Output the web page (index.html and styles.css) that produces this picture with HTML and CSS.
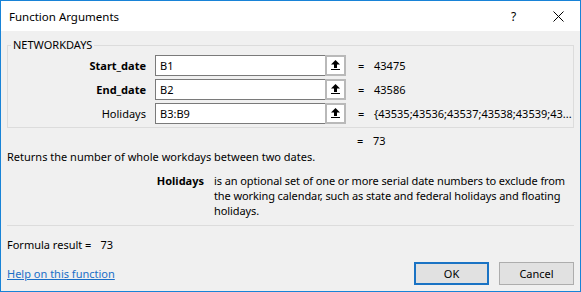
FILE: index.html
```html
<!DOCTYPE html>
<html>
<head>
    <title>Function Arguments</title>
    <link rel="stylesheet" href="styles.css">
</head>
<body>
    <div class="dialog">
        <div class="titlebar">
            <span class="title">Function Arguments</span>
            <span class="help">?</span>
            <span class="close">
                <svg width="11" height="11" viewBox="0 0 11 11"><path d="M0.5 0.5 L10.5 10.5 M10.5 0.5 L0.5 10.5" stroke="#000" stroke-width="1" fill="none"/></svg>
            </span>
        </div>

        <div class="content">
            <fieldset class="group">
                <legend>NETWORKDAYS</legend>
                <div class="arg">
                    <label class="req">Start_date</label>
                    <div class="field">B1</div>
                    <div class="collapse">
                        <svg width="9" height="11" viewBox="0 0 9 11"><path d="M4.5 0 L9 4.5 L0 4.5 Z" fill="#000"/><rect x="3" y="4" width="3" height="4" fill="#000"/><rect x="0" y="9" width="9" height="1" fill="#000"/></svg>
                    </div>
                    <span class="eq">=</span>
                    <span class="value">43475</span>
                </div>
                <div class="arg">
                    <label class="req">End_date</label>
                    <div class="field">B2</div>
                    <div class="collapse">
                        <svg width="9" height="11" viewBox="0 0 9 11"><path d="M4.5 0 L9 4.5 L0 4.5 Z" fill="#000"/><rect x="3" y="4" width="3" height="4" fill="#000"/><rect x="0" y="9" width="9" height="1" fill="#000"/></svg>
                    </div>
                    <span class="eq">=</span>
                    <span class="value">43586</span>
                </div>
                <div class="arg">
                    <label>Holidays</label>
                    <div class="field">B3:B9</div>
                    <div class="collapse">
                        <svg width="9" height="11" viewBox="0 0 9 11"><path d="M4.5 0 L9 4.5 L0 4.5 Z" fill="#000"/><rect x="3" y="4" width="3" height="4" fill="#000"/><rect x="0" y="9" width="9" height="1" fill="#000"/></svg>
                    </div>
                    <span class="eq">=</span>
                    <span class="value">{43535;43536;43537;43538;43539;43...</span>
                </div>
            </fieldset>

            <div class="result-row">
                <span class="eq">=</span>
                <span class="value">73</span>
            </div>

            <p class="summary">Returns the number of whole workdays between two dates.</p>

            <div class="arg-help">
                <span class="arg-name">Holidays</span>
                <span class="arg-desc">is an optional set of one or more serial date numbers to exclude from the working calendar, such as state and federal holidays and floating holidays.</span>
            </div>

            <hr class="sep">

            <div class="formula">Formula result =<span class="formula-value">73</span></div>

            <div class="footer">
                <a class="help-link" href="#">Help on this function</a>
                <div class="actions">
                    <button class="btn default">OK</button>
                    <button class="btn">Cancel</button>
                </div>
            </div>
        </div>
    </div>
</body>
</html>
```

FILE: styles.css
```css
body {
    margin: 0;
    font-family: "Noto Sans", "Open Sans", sans-serif;
    font-size: 11px;
    color: #000;
}

.dialog {
    width: 581px;
    height: 292px;
    box-sizing: border-box;
    border: 1px solid #1883d7;
    background: #f0f0f0;
    display: flex;
    flex-direction: column;
}

.titlebar {
    height: 30px;
    background: #fff;
    display: flex;
    align-items: center;
    padding-left: 8px;
}
.title { flex: 1; font-size: 11.5px; }
.help { width: 10px; margin-right: 32px; font-size: 12px; }
.close { width: 11px; height: 11px; margin-right: 16px; display: flex; }

.content {
    padding: 6px 6px 0 6px;
    flex: 1;
    display: flex;
    flex-direction: column;
}

.group {
    margin: 0;
    border: 1px solid #dcdcdc;
    padding: 2px 0 3px 0;
}
.group legend {
    margin-left: 3px;
    padding: 0 2px;
    line-height: 16px;
}

.arg {
    display: flex;
    align-items: center;
    height: 21px;
    margin-bottom: 3px;
}
.arg:last-child { margin-bottom: 0; }
.arg label {
    width: 138px;
    text-align: right;
    margin-right: 9px;
}
.arg label.req { font-weight: bold; }

.field {
    width: 165px;
    height: 19px;
    border: 1px solid #7a7a7a;
    border-right: none;
    background: #fff;
    padding-left: 4px;
    line-height: 19px;
}
.collapse {
    width: 17px;
    height: 17px;
    border: 2px solid #b9b9b9;
    background: #fff;
    display: flex;
    align-items: center;
    justify-content: center;
}

.eq { margin-left: 12px; width: 16px; }
.value { white-space: nowrap; }

.result-row {
    display: flex;
    padding-left: 338px;
    margin-top: 5px;
    line-height: 16px;
}

.summary {
    margin: 0;
    line-height: 16px;
}

.arg-help {
    display: flex;
    margin-top: 8px;
    line-height: 15px;
}
.arg-name {
    width: 197px;
    text-align: right;
    font-weight: bold;
    flex-shrink: 0;
}
.arg-desc {
    margin-left: 10px;
    letter-spacing: -0.1px;
}

.sep {
    margin: 7px 0 0 0;
    border: none;
    border-top: 1px solid #dcdcdc;
}

.formula {
    margin-top: 11px;
    line-height: 16px;
}
.formula-value { margin-left: 9px; }

.footer {
    display: flex;
    align-items: flex-end;
    justify-content: space-between;
    margin-top: auto;
    padding-bottom: 6px;
}
.help-link {
    color: #1a6ec7;
    text-decoration: underline;
    line-height: 16px;
    margin-bottom: 3px;
}
.actions { display: flex; gap: 10px; }
.btn {
    width: 75px;
    height: 23px;
    font-family: inherit;
    font-size: 11px;
    background: #e1e1e1;
    border: 1px solid #adadad;
    padding: 0;
}
.btn.default { border: 2px solid #1a73c4; }
```
